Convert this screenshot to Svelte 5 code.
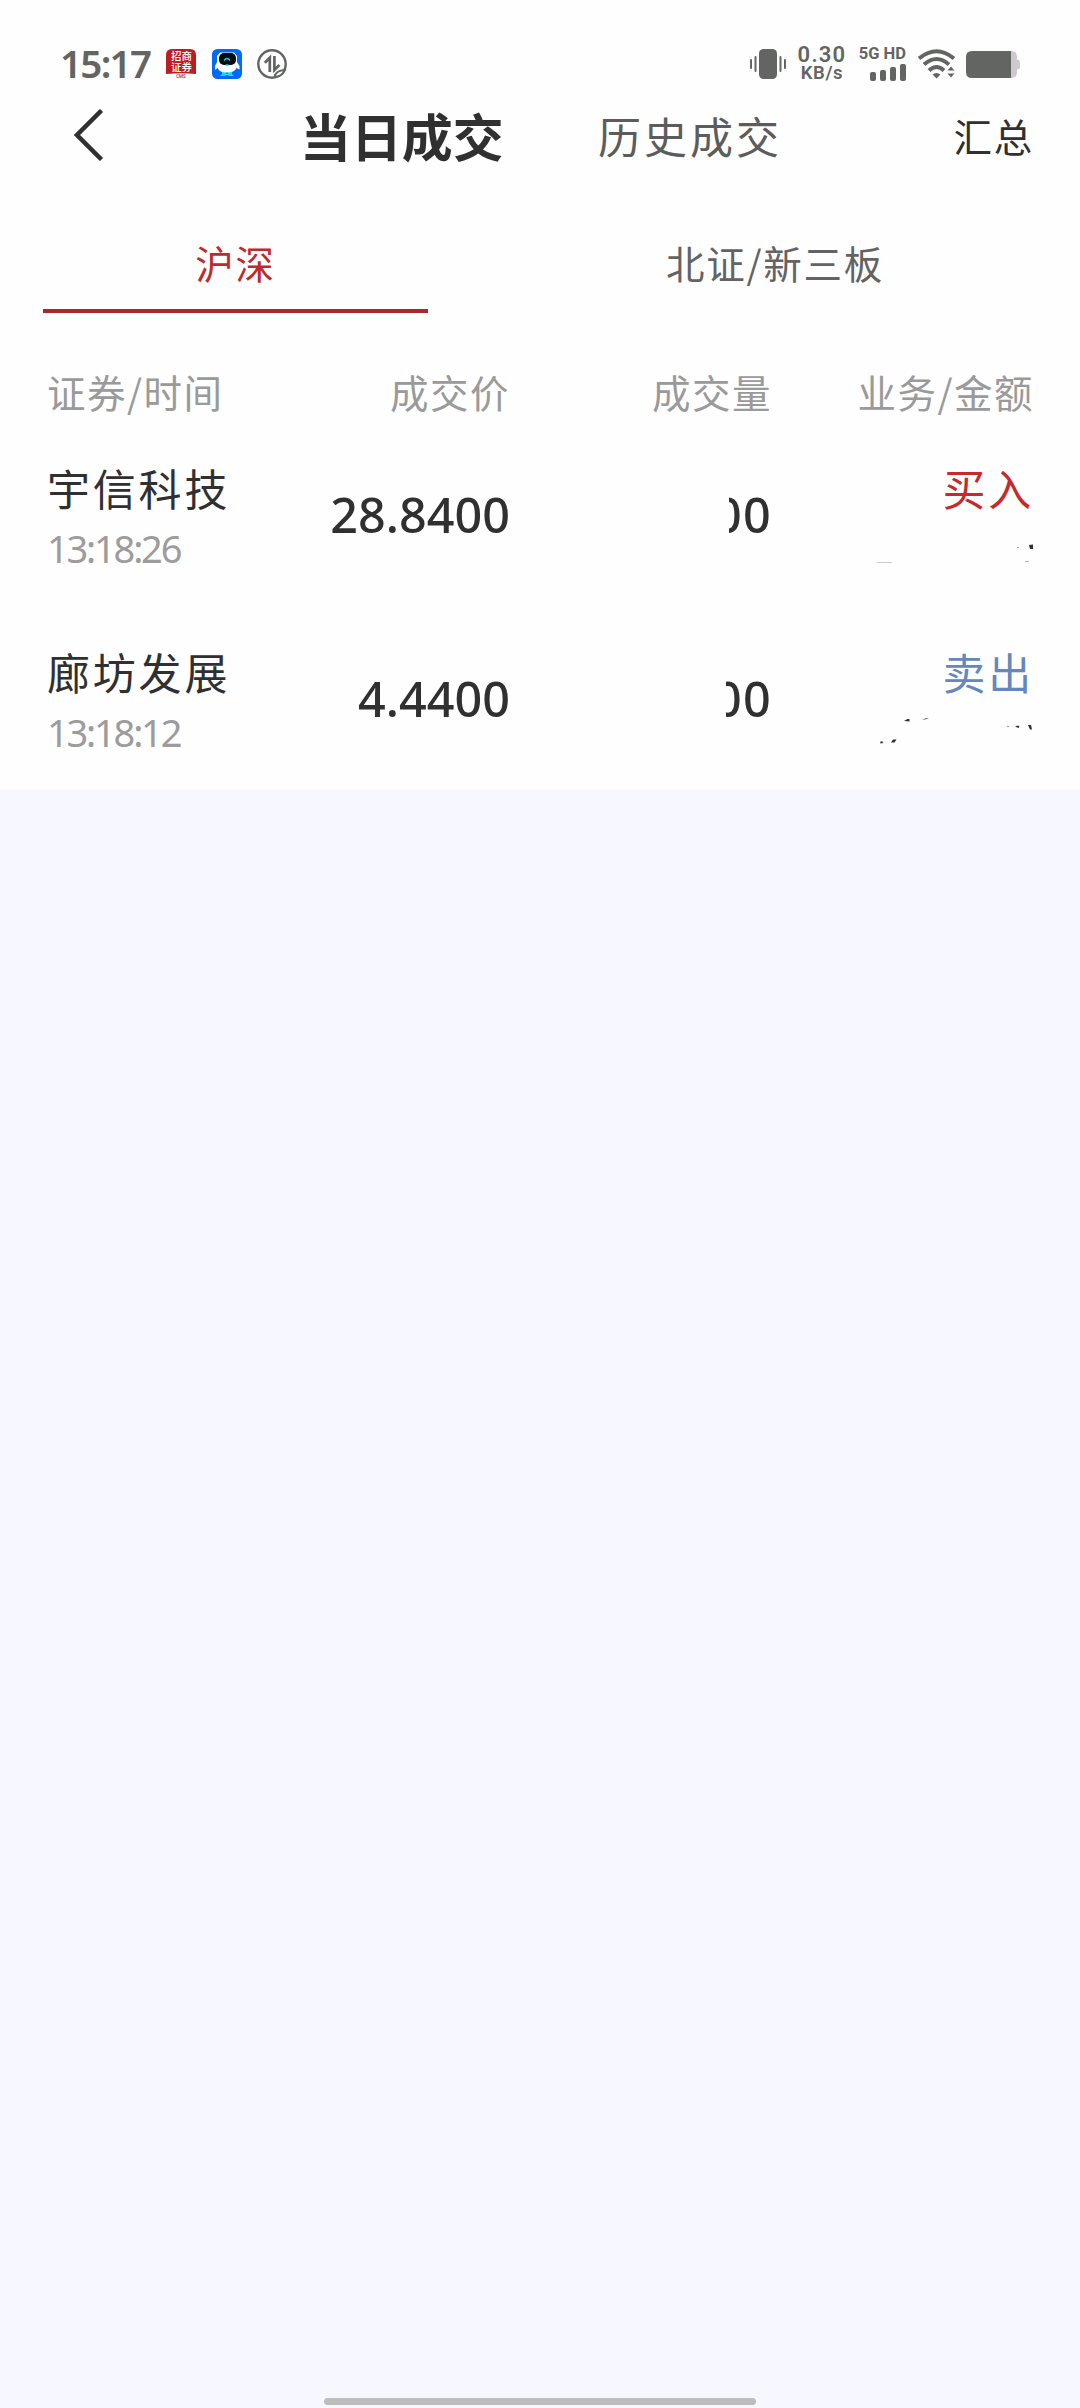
<script lang="ts">
    type Speck = { d: string; opacity: number };
    type Trade = {
        name: string;
        time: string;
        price: string;
        volume: string;
        volumeWidth: number;
        side: 'buy' | 'sell';
        specks: Speck[];
    };

    const columns = ['证券/时间', '成交价', '成交量', '业务/金额'];
    const sideLabels = { buy: '买入', sell: '卖出' };

    let activeTab = $state(0);
    const tabs = ['沪深', '北证/新三板'];

    // The amount is masked, only a few specks of it stay visible
    const trades: Trade[] = [
        {
            name: '宇信科技',
            time: '13:18:26',
            price: '28.8400',
            volume: '00',
            volumeWidth: 43,
            side: 'buy',
            specks: [
                { d: 'M7 39h15v1H7z', opacity: 0.25 },
                { d: 'M147 24h2v1h-2z', opacity: 0.4 },
                { d: 'M159 22l4-.5v4.500h-3z', opacity: 1 },
                { d: 'M155 38h4v1h-4z', opacity: 0.35 },
            ],
        },
        {
            name: '廊坊发展',
            time: '13:18:12',
            price: '4.4400',
            volume: '00',
            volumeWidth: 46,
            side: 'sell',
            specks: [
                { d: 'M34 14l3.500-2h2v2.500z', opacity: 1 },
                { d: 'M52 13l4-2 3 .5-4 1z', opacity: 0.7 },
                { d: 'M10 35l2-1 1.500 2-3 .5z', opacity: 0.9 },
                { d: 'M21 35.500l2-3 3.500 0-2 3z', opacity: 1 },
                { d: 'M137 19h2v1h-2z', opacity: 0.5 },
                { d: 'M145 19.500l3-1 1.500 1-1 1.500z', opacity: 1 },
                { d: 'M158 18h3l1 4.500h-2z', opacity: 1 },
            ],
        },
    ];
</script>

<div class="page">
    <div class="status-bar">
        <span class="clock">15:17</span>
        <svg class="app-icon" viewBox="0 0 30 30">
            <path d="M6 0h18q6 0 6 6v19q-15-1.500-30 0V6q0-6 6-6z" fill="#bd1c20" />
            <text x="15.500" y="11.300" class="app-name">招商</text>
            <text x="15.500" y="22" class="app-name">证券</text>
            <text x="15" y="29.300" class="app-sub">CMS</text>
        </svg>
        <svg class="app-icon blue" viewBox="0 0 30 30">
            <rect width="30" height="30" rx="5.500" fill="#0369fb" />
            <path d="M10 22h4v2.500h2V22h4v3l2 2h-5l-1-1h-2l-1 1H8l2-2z" fill="#14dfe0" />
            <path d="M8 3.500h14l3 3.500v6l2.500 4v3.500l-3-1.500q-2 4.500-9.500 4.500T5.500 19l-2.500 2v-4l2-4V7z" fill="#fff" />
            <rect x="7" y="4" width="17" height="12" rx="5" fill="#050a17" />
            <path d="M12 11.500q3-4 6 0M13.500 16h3" fill="none" stroke="#14cfd0" stroke-width="1.300" />
        </svg>
        <svg class="app-icon transfer" viewBox="0 0 30 30">
            <circle cx="15" cy="15" r="13.700" fill="none" stroke="#636563" stroke-width="2.400" />
            <path d="M12.800 23V8.800l-5 5M17.400 7v14l5-5" fill="none" stroke="#636563" stroke-width="2.700" />
            <path d="M17.500 28q1-6.500 10.500-7-3 6.500-10.500 7z" fill="#fff" stroke="#636563" stroke-width="1.800" />
        </svg>

        <div class="status-right">
            <svg class="vibrate" viewBox="0 0 36 30">
                <rect x="9" width="18" height="30" rx="4.500" />
                <path d="M5.500 8v14M1 11v8M30.500 8v14M35 11v8" stroke="#636563" stroke-width="2" stroke-linecap="round" />
            </svg>
            <div class="speed">
                <span class="speed-value">0.30</span>
                <span class="speed-unit">KB/s</span>
            </div>
            <div class="network">
                <span>5G HD</span>
                <svg viewBox="0 0 36 17">
                    <rect x="0" y="8" width="6" height="9" rx="2" />
                    <rect x="10" y="6" width="6" height="11" rx="2" />
                    <rect x="20" y="3" width="6" height="14" rx="2" />
                    <rect x="30" y="0" width="6" height="17" rx="2" />
                </svg>
            </div>
            <svg class="wifi" viewBox="0 0 37 30">
                <g fill="none" stroke="#636563" stroke-width="4">
                    <path d="M1 9.500Q18.500-5 36 9.500" />
                    <path d="M6 15.500Q18.500 4.500 31 15.500" />
                    <path d="M11 21.500Q18.500 14.500 26 21.500" />
                </g>
                <path d="M14.500 25.500q4-3 8 0l-4 4z" />
                <path d="M29.500 21.500l3.500-4 3.500 4zM29.500 24.500h7l-3.500 4z" />
            </svg>
            <svg class="battery" viewBox="0 0 54 27">
                <path d="M44 0h1q6 0 6 6v2.500q3 .5 3 2.500v5q0 2-3 2.500V21q0 6-6 6h-1z" fill="#cdc9ce" />
                <path d="M6 0h39v27H6q-6 0-6-6V6q0-6 6-6z" />
            </svg>
        </div>
    </div>

    <header class="nav">
        <svg class="back" viewBox="0 0 30 52">
            <path d="M27.500 1.500L3 26l24.500 24.500" fill="none" stroke="#303030" stroke-width="4.500" />
        </svg>
        <h1>当日成交</h1>
        <span class="history">历史成交</span>
        <span class="summary">汇总</span>
    </header>

    <div class="tabs">
        {#each tabs as tab, i}
            <button class="tab" class:active={activeTab === i} onclick={() => (activeTab = i)}>{tab}</button>
        {/each}
    </div>

    <div class="grid table-head">
        {#each columns as column}
            <span>{column}</span>
        {/each}
    </div>

    {#each trades as trade}
        <div class="grid trade">
            <div class="stock">
                <span class="name">{trade.name}</span>
                <span class="time">{trade.time}</span>
            </div>
            <span class="number">{trade.price}</span>
            <div class="volume">
                <span class="number" style="width: {trade.volumeWidth}px">{trade.volume}</span>
            </div>
            <div class="business">
                <span class="name {trade.side}">{sideLabels[trade.side]}</span>
                <svg class="masked" viewBox="0 0 164 50">
                    {#each trade.specks as speck}
                        <path d={speck.d} opacity={speck.opacity} />
                    {/each}
                </svg>
            </div>
        </div>
    {/each}

    <div class="rest">
        <div class="home-indicator"></div>
    </div>
</div>

<style>
    :global(body) {
        margin: 0;
        background: #f6f7ff;
    }

    .page {
        display: flex;
        flex-direction: column;
        width: 1080px;
        height: 2408px;
        background: #fefefe;
        color: #303030;
        font-family: "Noto Sans CJK SC", sans-serif;
        overflow: hidden;
    }

    svg {
        display: block;
        flex: none;
    }

    span, h1 {
        white-space: nowrap;
    }

    .status-bar {
        display: flex;
        align-items: center;
        height: 98px;
        padding: 30px 60px 0 60px;
        box-sizing: border-box;
        color: #636563;
        fill: #636563;
        font-family: Roboto, sans-serif;
        font-weight: 600;
    }

    .clock {
        width: 106px;
        font-family: "Noto Sans", sans-serif;
        font-size: 38.5px;
        letter-spacing: -1.7px;
        line-height: 66px;
        height: 68px;
    }

    .app-icon {
        width: 30px;
        height: 30px;
    }

    .app-icon.blue {
        margin-left: 16px;
    }

    .app-icon.transfer {
        margin-left: 15px;
    }

    .app-name {
        fill: #fff;
        font-family: "Noto Sans CJK SC", sans-serif;
        font-size: 10.5px;
        font-weight: 500;
        text-anchor: middle;
    }

    .app-sub {
        fill: #b33;
        font-size: 4.5px;
        text-anchor: middle;
    }

    .status-right {
        display: flex;
        align-items: center;
        margin-left: auto;
    }

    .vibrate {
        width: 36px;
        height: 30px;
    }

    .speed {
        display: flex;
        flex-direction: column;
        align-items: center;
        width: 50px;
        margin-left: 11px;
    }

    .speed-value {
        font-size: 22px;
        font-weight: 600;
        line-height: 18px;
        letter-spacing: 1.2px;
    }

    .speed-unit {
        font-size: 18.5px;
        font-weight: 600;
        line-height: 19px;
        letter-spacing: 0.6px;
    }

    .network {
        display: flex;
        flex-direction: column;
        align-items: flex-end;
        width: 48px;
        margin-left: 11px;
    }

    .network span {
        font-size: 16.5px;
        font-weight: 700;
        line-height: 14px;
        height: 17px;
    }

    .network svg {
        width: 36px;
        height: 17px;
    }

    .wifi {
        width: 37px;
        height: 30px;
        margin-left: 12px;
    }

    .battery {
        width: 54px;
        height: 27px;
        margin-left: 11px;
    }

    .nav {
        display: flex;
        align-items: center;
        height: 74px;
        padding: 0 48px 0 74px;
    }

    .back {
        width: 30px;
        height: 52px;
    }

    h1 {
        width: 298px;
        margin: 0 0 0 196px;
        font-size: 50.9px;
        font-weight: 700;
        line-height: 68px;
    }

    .history {
        color: #5c5c5c;
        font-size: 43px;
        letter-spacing: 3px;
    }

    .summary {
        margin-left: auto;
        margin-right: -2px;
        font-size: 38.5px;
        letter-spacing: 1.7px;
    }

    .tabs {
        display: flex;
        justify-content: space-between;
        height: 141px;
        padding: 0 112px 0 43px;
    }

    .tab {
        width: 385px;
        padding: 40px 0 0;
        border: 0;
        border-bottom: 4px solid transparent;
        background: none;
        color: #636363;
        font-family: inherit;
        font-size: 38.5px;
        letter-spacing: 1.7px;
        line-height: 100px;
        height: 141px;
        box-sizing: border-box;
        white-space: nowrap;
    }

    .tab:last-child {
        width: 496px;
        margin-right: -55px;
    }

    .tab.active {
        border-bottom-color: #a9282c;
        color: #bf2a2b;
    }

    .grid {
        display: grid;
        grid-template-columns: 201px 262px 262px 262px;
        align-items: center;
        padding: 0 46px 0 47px;
    }

    .table-head {
        height: 109px;
        box-sizing: border-box;
        padding-top: 46px;
        color: #9a9a9a;
        font-size: 38.5px;
        letter-spacing: 1.5px;
        line-height: 60px;
    }

    .table-head span:not(:first-child) {
        text-align: right;
    }

    .trade {
        height: 184px;
    }

    .stock, .business {
        display: flex;
        flex-direction: column;
        gap: 6px;
        padding-top: 1px;
    }

    .business {
        align-items: flex-end;
    }

    .name {
        font-size: 43px;
        letter-spacing: 2.8px;
        line-height: 60px;
    }

    .time {
        color: #9c9c9c;
        font-family: "Noto Sans", sans-serif;
        font-size: 38px;
        letter-spacing: -2.2px;
        line-height: 50px;
    }

    .number {
        font-family: "Noto Sans", sans-serif;
        font-size: 48.5px;
        font-weight: 500;
        letter-spacing: 0;
        line-height: 62px;
        text-align: right;
    }

    .volume {
        display: flex;
        justify-content: flex-end;
    }

    .volume .number {
        display: flex;
        justify-content: flex-end;
        letter-spacing: 1.2px;
        overflow: hidden;
    }

    .buy {
        color: #c62a2a;
    }

    .sell {
        color: #6488bd;
    }

    .masked {
        width: 164px;
        height: 50px;
        fill: #303030;
    }

    .rest {
        display: flex;
        flex: 1;
        align-items: flex-end;
        justify-content: center;
        padding-bottom: 3px;
        background: #f6f7ff;
    }

    .home-indicator {
        width: 432px;
        height: 7px;
        border-radius: 4px;
        background: #bdbdbd;
    }
</style>
